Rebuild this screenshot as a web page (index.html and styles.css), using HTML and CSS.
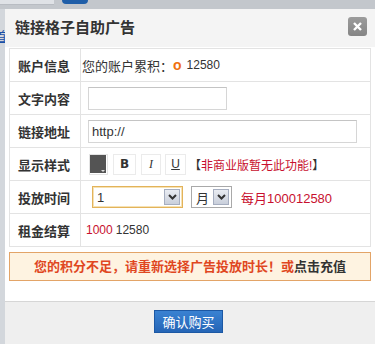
FILE: index.html
```html
<!DOCTYPE html>
<html lang="zh-CN">
<head>
    <meta charset="UTF-8">
    <title>链接格子自助广告</title>
    <link rel="stylesheet" href="styles.css">
</head>
<body>
    <div class="page">
        <div class="topbar">
            <span class="top-light"></span>
            <span class="top-tab"></span>
        </div>
        <a class="home-link" href="#">首页</a>
    </div>

    <div class="dialog">
        <div class="dialog-head">
            <h3>链接格子自助广告</h3>
            <span class="close">
                <svg width="9" height="9" viewBox="0 0 9 9"><path d="M1 1 L8 8 M8 1 L1 8" stroke="#fff" stroke-width="2.4"/></svg>
            </span>
        </div>

        <div class="dialog-body">
            <div class="ad-form">
                <div class="form-row">
                    <div class="label">账户信息</div>
                    <div class="field first">您的账户累积：<b class="coin">o</b><span class="num">12580</span></div>
                </div>
                <div class="form-row">
                    <div class="label">文字内容</div>
                    <div class="field"><input type="text" class="txt short"></div>
                </div>
                <div class="form-row">
                    <div class="label">链接地址</div>
                    <div class="field"><input type="text" class="txt long" value="http://"></div>
                </div>
                <div class="form-row">
                    <div class="label">显示样式</div>
                    <div class="field">
                        <span class="swatch"><span class="swatch-color"></span></span>
                        <span class="style-btn bold">B</span>
                        <span class="style-btn italic">I</span>
                        <span class="style-btn under">U</span>
                        <span class="tip"><i>【</i>非商业版暂无此功能!<i>】</i></span>
                    </div>
                </div>
                <div class="form-row">
                    <div class="label">投放时间</div>
                    <div class="field">
                        <div class="select focus">
                            <span class="val">1</span>
                            <span class="arrow"><svg width="9" height="6" viewBox="0 0 9 6"><path d="M1 1 L4.5 4.5 L8 1" stroke="#333" stroke-width="2" fill="none"/></svg></span>
                        </div>
                        <div class="select unit">
                            <span class="val">月</span>
                            <span class="arrow"><svg width="9" height="6" viewBox="0 0 9 6"><path d="M1 1 L4.5 4.5 L8 1" stroke="#333" stroke-width="2" fill="none"/></svg></span>
                        </div>
                        <span class="price">每月100012580</span>
                    </div>
                </div>
                <div class="form-row">
                    <div class="label">租金结算</div>
                    <div class="field"><span class="red">1000</span> 12580</div>
                </div>
            </div>

            <div class="notice">您的积分不足，请重新选择广告投放时长！或<a href="#">点击充值</a></div>
        </div>

        <div class="dialog-foot">
            <button>确认购买</button>
        </div>
    </div>
</body>
</html>
```

FILE: styles.css
```css
body {
    margin: 0;
    height: 344px;
    overflow: hidden;
    background: #c9ccd0;
    font-family: "Liberation Sans", "Noto Sans CJK SC", sans-serif;
    font-size: 12px;
    color: #333;
}
.page {
    height: 344px;
    background: #d3d7dc;
}
.topbar {
    height: 9px;
    background: #c3c7cc;
    display: flex;
    align-items: flex-start;
}
.top-light {
    width: 54px;
    height: 4px;
    background: #dfe2e6;
    border-bottom: 1px solid #b8bcc2;
}
.top-tab {
    width: 26px;
    height: 4px;
    margin-left: 8px;
    background: #1f5ea8;
    border-radius: 0 0 4px 4px;
}
.home-link {
    display: block;
    margin: 17px 0 0 -6px;
    font-size: 13px;
    color: #1a4fa6;
}

.dialog {
    position: absolute;
    left: 5px;
    top: 9px;
    width: 370px;
    background: #fff;
}
.dialog-head {
    height: 34px;
    padding: 0 8px 4px 10px;
    background: #f4f4f4;
    display: flex;
    align-items: center;
    justify-content: space-between;
}
.dialog-head h3 {
    margin: 0;
    font-size: 15px;
    font-weight: bold;
    color: #333;
}
.close {
    width: 19px;
    height: 19px;
    border-radius: 3px;
    background: linear-gradient(#9c9c9c, #858585);
    display: flex;
    align-items: center;
    justify-content: center;
}

.dialog-body {
    padding: 1px 4px 20px;
}
.ad-form {
    border: 1px solid #e3e3e3;
    border-bottom: none;
}
.form-row {
    display: flex;
    height: 32px;
    border-bottom: 1px solid #e3e3e3;
}
.label {
    width: 71px;
    border-right: 1px solid #e3e3e3;
    display: flex;
    align-items: center;
    padding-left: 8px;
    box-sizing: border-box;
    font-size: 13px;
    font-weight: bold;
    color: #333;
}
.field {
    flex: 1;
    display: flex;
    align-items: center;
    padding-left: 5px;
}
.field.first {
    padding-left: 1px;
    font-size: 13px;
}
.coin {
    color: #f07010;
    font-family: "Liberation Sans", sans-serif;
    font-size: 14px;
    margin: 0 5px 0 0;
}
.num {
    font-size: 12px;
}
.txt {
    height: 23px;
    box-sizing: border-box;
    margin: 0 0 0 2px;
    border: 1px solid #d6d6d6;
    border-top-color: #c4c4c4;
    padding: 2px 3px;
    font-family: "Liberation Sans", sans-serif;
    font-size: 13px;
    color: #333;
}
.txt.short {
    width: 139px;
}
.txt.long {
    width: 269px;
}
.swatch {
    width: 19px;
    height: 21px;
    box-sizing: border-box;
    margin-left: 3px;
    border: 1px solid #e4e4e4;
    display: flex;
    align-items: flex-start;
}
.swatch-color {
    width: 16px;
    height: 18px;
    background: #545454;
    position: relative;
}
.swatch-color::after {
    content: "";
    position: absolute;
    right: 1px;
    bottom: 1px;
    border-left: 2px solid transparent;
    border-right: 2px solid transparent;
    border-top: 2px solid #ddd;
}
.style-btn {
    width: 22px;
    height: 21px;
    box-sizing: border-box;
    margin-left: 5px;
    border: 1px solid #ebebeb;
    display: flex;
    align-items: center;
    justify-content: center;
    font-size: 12px;
    color: #333;
}
.style-btn.bold {
    width: 23px;
    font-weight: bold;
    font-family: "DejaVu Sans", sans-serif;
}
.style-btn.italic {
    width: 20px;
    margin-left: 5px;
    font-style: italic;
    font-family: "Liberation Serif", serif;
}
.style-btn.under {
    width: 21px;
    margin-left: 4px;
    text-decoration: underline;
}
.tip {
    margin-left: 3px;
    font-size: 12px;
    color: #c8102e;
}
.tip i {
    font-style: normal;
    color: #333;
}
.select {
    height: 22px;
    box-sizing: border-box;
    display: flex;
    align-items: center;
    justify-content: space-between;
    border: 1px solid #a9a9a9;
    background: #fff;
    font-size: 13px;
}
.select.focus {
    width: 91px;
    margin-left: 6px;
    border: 1px solid #e3b35a;
    box-shadow: inset 0 0 0 1px #f6e2b4;
}
.select.unit {
    width: 41px;
    margin-left: 8px;
}
.val {
    padding-left: 4px;
}
.arrow {
    width: 16px;
    height: 16px;
    margin-right: 2px;
    box-sizing: border-box;
    border: 1px solid #a6aec0;
    background: linear-gradient(#e9ecf2, #c9cfdb);
    display: flex;
    align-items: center;
    justify-content: center;
}
.price {
    margin-left: 9px;
    font-size: 13px;
    color: #c8102e;
}
.red {
    color: #c8102e;
    margin-right: 3px;
}

.notice {
    margin-top: 5px;
    height: 27px;
    line-height: 27px;
    border: 1px solid #e3a467;
    background: #fef3e1;
    text-align: center;
    font-size: 13px;
    font-weight: bold;
    color: #e0471f;
}
.notice a {
    color: #333;
    text-decoration: none;
}

.dialog-foot {
    height: 40px;
    border-top: 1px solid #d6d6d6;
    background: #efefef;
    padding-top: 8px;
    display: flex;
    justify-content: center;
}
button {
    width: 69px;
    height: 23px;
    margin-right: 3px;
    border: 1px solid #1c58a4;
    background: linear-gradient(#3a82d2, #2565b6);
    color: #fff;
    font-family: "Noto Sans CJK SC", sans-serif;
    font-size: 13px;
    padding: 0;
    cursor: pointer;
}
```
